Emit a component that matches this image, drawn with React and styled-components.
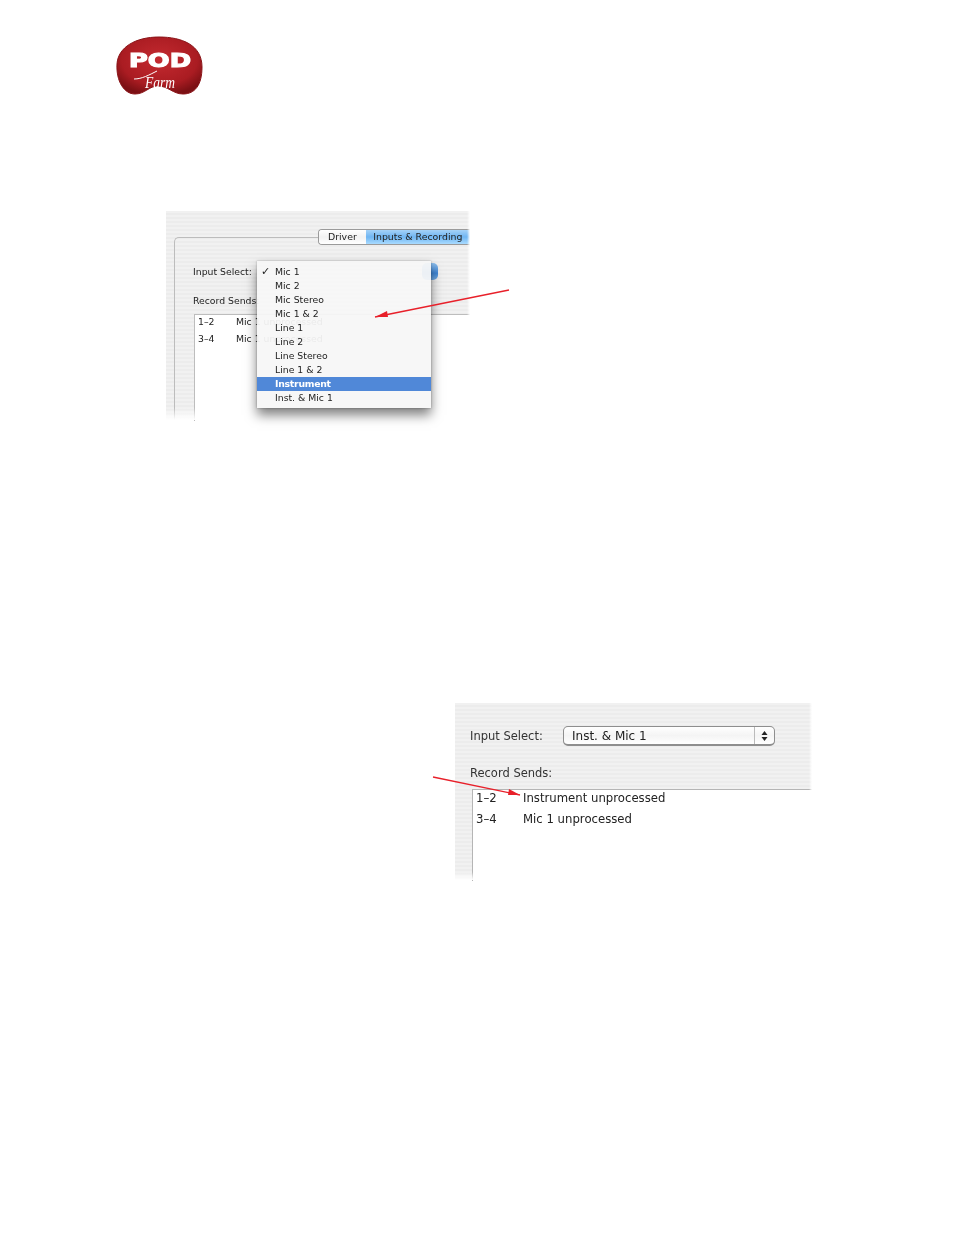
import React from 'react';
import styled, { createGlobalStyle } from 'styled-components';

const Global = createGlobalStyle`
  html, body { margin: 0; padding: 0; background: #fff; }
  body { font-family: "DejaVu Sans", "Liberation Sans", sans-serif; color: #222; }
`;

const stripes = `repeating-linear-gradient(180deg, #f1f1f1 0, #f1f1f1 2px, #ececec 2px, #ececec 4px)`;

const Page = styled.div`
  width: 954px;
  height: 1235px;
  overflow: hidden;
  padding-top: 36px;
  box-sizing: border-box;
`;
const Logo = styled.svg`
  display: block;
  width: 88px;
  height: 60px;
  margin-left: 116px;
  filter: blur(0.3px);
`;
const FigureA = styled.div`
  position: relative;
  width: 304px;
  height: 209px;
  margin: 115px 0 0 166px;
  padding: 26px 0 0 8px;
  box-sizing: border-box;
  background: ${stripes};
  filter: blur(0.35px);
`;
const Fade = styled.div`
  position: absolute;
  pointer-events: none;
  top: 0;
  bottom: 0;
  right: 0;
  width: ${(p) => p.$w}px;
  background: linear-gradient(90deg, rgba(255,255,255,0), #fff);
`;
const FadeBottom = styled.div`
  position: absolute;
  pointer-events: none;
  left: 0;
  right: 0;
  bottom: 0;
  height: ${(p) => p.$h}px;
  background: linear-gradient(180deg, rgba(255,255,255,0), #fff);
`;
const Panel = styled.div`
  height: 100%;
  padding: 24px 0 0 18px;
  box-sizing: border-box;
  border: 1px solid #bcbcbc;
  border-width: 1px 0 0 1px;
  border-top-left-radius: 5px;
`;
const Tabs = styled.div`
  position: absolute;
  left: 152px;
  top: 18px;
  width: 152px;
  height: 16px;
  display: flex;
  box-sizing: border-box;
  border: 1px solid #9a9a9a;
  border-right: 0;
  border-radius: 4px 0 0 4px;
  overflow: hidden;
`;
const Tab = styled.div`
  display: flex;
  align-items: center;
  justify-content: center;
  padding-bottom: 1px;
  box-sizing: border-box;
  font-size: 9.4px;
  width: ${(p) => p.$w}px;
  background: ${(p) =>
    p.$on
      ? 'linear-gradient(180deg, #a5d2f8 0%, #6fb5f2 50%, #a9dbff 100%)'
      : 'linear-gradient(180deg, #fff 0%, #f2f2f2 50%, #fff 100%)'};
`;
const SmallRow = styled.div`
  display: flex;
  align-items: center;
  height: 18px;
  font-size: 9.3px;
  margin-bottom: ${(p) => p.$mb}px;
  white-space: nowrap;
`;
const BlueSelect = styled.div`
  position: absolute;
  left: 256px;
  top: 52px;
  width: 16px;
  height: 17px;
  border-radius: 5px;
  background: linear-gradient(180deg, #8fc0ee, #3f86d6 60%, #74aee8);
`;
const SmallList = styled.div`
  margin-left: 1px;
  height: 106px;
  background: #fff;
  border: 1px solid #bdbdbd;
  border-width: 1px 0 0 1px;
`;
const SmallItem = styled.div`
  display: flex;
  height: 17px;
  padding: 0 0 5px 3px;
  box-sizing: border-box;
  align-items: center;
  font-size: 9.3px;
  white-space: nowrap;
`;
const SmallCol = styled.span`
  width: 38px;
`;
const Menu = styled.div`
  position: absolute;
  left: 91px;
  top: 50px;
  width: 174px;
  height: 147px;
  padding-top: 4px;
  box-sizing: border-box;
  background: rgba(246, 246, 246, 0.94);
  box-shadow: 0 7px 11px rgba(0, 0, 0, 0.5), 0 0 2px rgba(0, 0, 0, 0.3);
`;
const MenuItem = styled.div`
  position: relative;
  height: 14px;
  line-height: 14px;
  padding-left: 18px;
  font-size: 9.3px;
  color: ${(p) => (p.$active ? '#fff' : '#222')};
  font-weight: ${(p) => (p.$active ? 600 : 400)};
  letter-spacing: ${(p) => (p.$active ? '-0.25px' : '0')};
  background: ${(p) => (p.$active ? '#5088d8' : 'transparent')};
`;
const Check = styled.span`
  position: absolute;
  left: 4px;
  font-size: 11px;
`;
const Arrow = styled.svg`
  position: absolute;
  overflow: visible;
  left: 0;
  top: 0;
  width: 1px;
  height: 1px;
`;
const FigureB = styled.div`
  position: relative;
  width: 357px;
  height: 177px;
  margin: 283px 0 0 455px;
  padding-left: 15px;
  box-sizing: border-box;
  background: ${stripes};
  filter: blur(0.35px);
`;
const BigRow = styled.div`
  display: flex;
  align-items: center;
  font-size: 11.5px;
  color: #333;
  height: ${(p) => p.$h}px;
  padding-top: ${(p) => p.$pt}px;
`;
const BigLabel = styled.span`
  width: 93px;
`;
const Select = styled.div`
  width: 212px;
  height: 20px;
  box-sizing: border-box;
  display: flex;
  align-items: center;
  justify-content: space-between;
  padding-left: 8px;
  font-size: 12px;
  color: #222;
  background: linear-gradient(180deg, #fff 0%, #f4f4f4 50%, #fff 100%);
  border: 1px solid #8e8e8e;
  border-bottom-width: 2px;
  border-radius: 5px;
`;
const Stepper = styled.div`
  width: 19px;
  height: 100%;
  border-left: 1px solid #bbb;
  display: flex;
  align-items: center;
  justify-content: center;
`;
const BigList = styled.div`
  margin: 7px 0 0 2px;
  height: 91px;
  background: #fff;
  border: 1px solid #b5b5b5;
  border-width: 1px 0 0 1px;
`;
const BigItem = styled.div`
  display: flex;
  align-items: center;
  height: 21px;
  padding: 0 0 6px 3px;
  box-sizing: border-box;
  font-size: 11.7px;
  color: #222;
`;
const BigCol = styled.span`
  width: 47px;
`;

const items = ['Mic 1', 'Mic 2', 'Mic Stereo', 'Mic 1 & 2', 'Line 1', 'Line 2', 'Line Stereo', 'Line 1 & 2', 'Instrument', 'Inst. & Mic 1'];

const PodLogo = () => (
  <Logo viewBox="0 0 88 60">
    <defs>
      <radialGradient id="podRed" cx="50%" cy="40%" r="62%">
        <stop offset="0%" stopColor="#c42a30" />
        <stop offset="72%" stopColor="#aa1c22" />
        <stop offset="100%" stopColor="#7c1014" />
      </radialGradient>
    </defs>
    <path d="M1 28C2 11 20 1 43 1C66 1 86 9 86 31C86 49 79 58 67 58C57 58 52 50 42 50C33 50 29 58 19 58C8 58 0 45 1 28Z" fill="url(#podRed)" stroke="#8a1418" strokeWidth="1" />
    <text x="13" y="31" fontFamily="DejaVu Sans" fontWeight="700" fontSize="20" textLength="62" lengthAdjust="spacingAndGlyphs" fill="#fff" stroke="#fff" strokeWidth="1.2">POD</text>
    <path d="M18 43C26 43 33 39 41 35" fill="none" stroke="#fff" strokeWidth="1" />
    <text x="29" y="52" fontFamily="Liberation Serif" fontStyle="italic" fontSize="17" textLength="30" lengthAdjust="spacingAndGlyphs" fill="#fff">Farm</text>
  </Logo>
);

const RedArrow = ({ x1, y1, x2, y2, ax, ay, bx, by }) => (
  <Arrow>
    <line x1={x1} y1={y1} x2={x2} y2={y2} stroke="#e8202a" strokeWidth="1.3" />
    <polygon points={`${x2},${y2} ${ax},${ay} ${bx},${by}`} fill="#e8202a" />
  </Arrow>
);

export default function App() {
  return (
    <Page>
      <Global />
      <PodLogo />
      <FigureA>
        <Panel>
          <SmallRow $mb={11}>Input Select:</SmallRow>
          <SmallRow $mb={5}>Record Sends:</SmallRow>
          <SmallList>
            <SmallItem><SmallCol>1–2</SmallCol>Mic 1 unprocessed</SmallItem>
            <SmallItem><SmallCol>3–4</SmallCol>Mic 1 unprocessed</SmallItem>
          </SmallList>
        </Panel>
        <Tabs>
          <Tab $w={47}>Driver</Tab>
          <Tab $w={105} $on>Inputs &amp; Recording</Tab>
        </Tabs>
        <BlueSelect />
        <Fade $w={3} />
        <FadeBottom $h={12} />
        <Menu>
          {items.map((t, i) => (
            <MenuItem key={t} $active={t === 'Instrument'}>
              {i === 0 && <Check>✓</Check>}
              {t}
            </MenuItem>
          ))}
        </Menu>
        <RedArrow x1={343} y1={79} x2={209} y2={106} ax={221} ay={100} bx={222} by={106} />
      </FigureA>
      <FigureB>
        <BigRow $h={20} $pt={23}>
          <BigLabel>Input Select:</BigLabel>
          <Select>
            Inst. &amp; Mic 1
            <Stepper>
              <svg width="7" height="12" viewBox="0 0 7 12">
                <path d="M3.5 1L6.5 5H.5Z M3.5 11L.5 7H6.5Z" fill="#222" />
              </svg>
            </Stepper>
          </Select>
        </BigRow>
        <BigRow $h={18} $pt={18}>Record Sends:</BigRow>
        <BigList>
          <BigItem><BigCol>1–2</BigCol>Instrument unprocessed</BigItem>
          <BigItem><BigCol>3–4</BigCol>Mic 1 unprocessed</BigItem>
        </BigList>
        <Fade $w={3} />
        <FadeBottom $h={8} />
        <RedArrow x1={-22} y1={74} x2={65} y2={92} ax={54} ay={86} bx={53} by={92} />
      </FigureB>
    </Page>
  );
}
